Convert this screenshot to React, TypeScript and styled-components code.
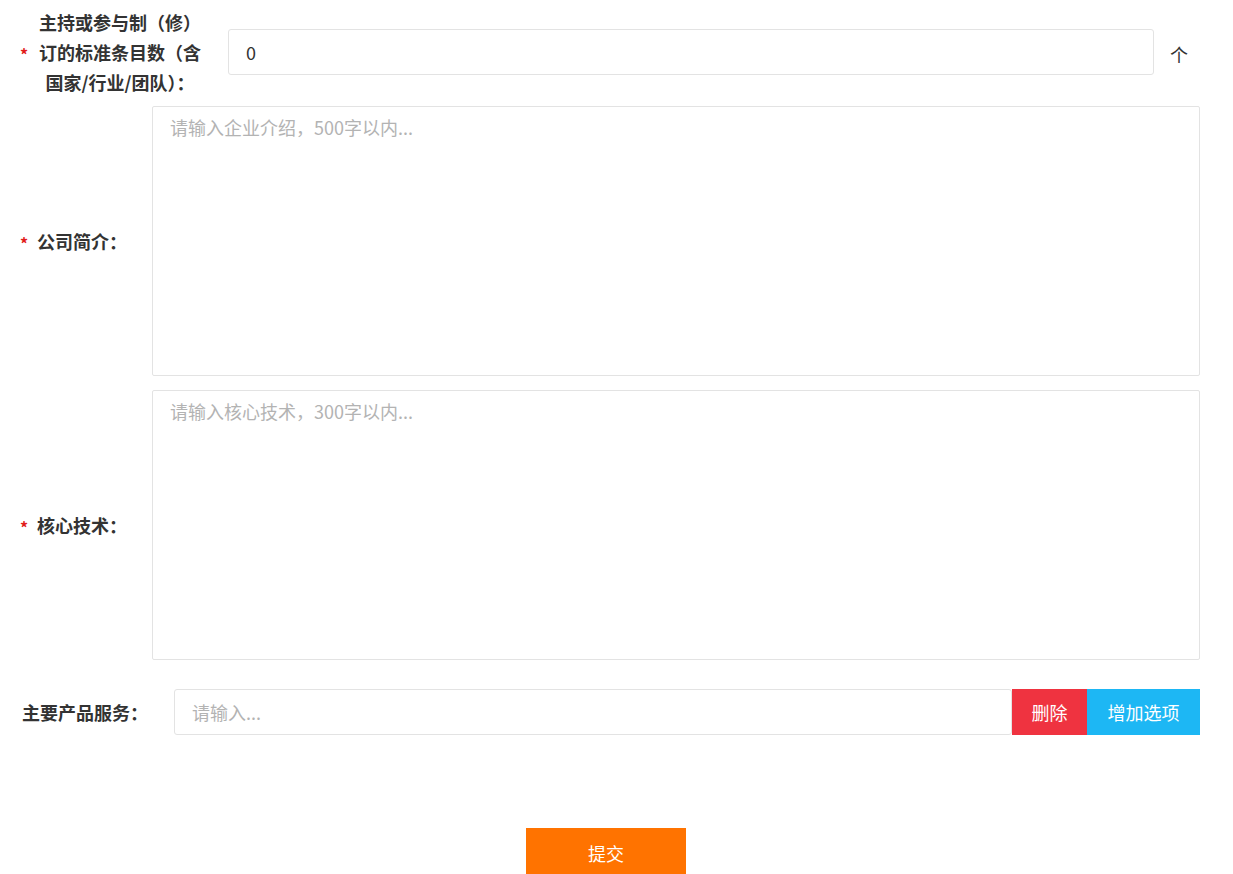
import React, { useState } from "react";
import styled, { createGlobalStyle } from "styled-components";

const GlobalStyle = createGlobalStyle`
  html, body {
    margin: 0;
    padding: 0;
    background: #fff;
    font-family: "Noto Sans CJK SC", "Noto Sans", "Liberation Sans", sans-serif;
    color: #333;
  }
  * {
    box-sizing: border-box;
  }
`;

const App = () => {
  const [standards, setStandards] = useState("0");
  const [intro, setIntro] = useState("");
  const [tech, setTech] = useState("");
  const [product, setProduct] = useState("");

  return (
    <>
      <GlobalStyle />
      <Form onSubmit={(e) => e.preventDefault()}>
        <Row $mb={9}>
          <Label $required>
            <LabelText $width={166} $center>
              主持或参与制（修）订的标准条目数（含国家/行业/团队）：
            </LabelText>
          </Label>
          <TextInput
            $gap={25}
            value={standards}
            onChange={(e) => setStandards(e.target.value)}
          />
          <Unit>个</Unit>
        </Row>

        <Row $mb={14}>
          <Label $required>
            <LabelText>公司简介：</LabelText>
          </Label>
          <TextArea
            placeholder='请输入企业介绍，500字以内...'
            value={intro}
            onChange={(e) => setIntro(e.target.value)}
          />
        </Row>

        <Row $mb={29}>
          <Label $required>
            <LabelText>核心技术：</LabelText>
          </Label>
          <TextArea
            placeholder='请输入核心技术，300字以内...'
            value={tech}
            onChange={(e) => setTech(e.target.value)}
          />
        </Row>

        <Row $mb={93}>
          <Label>
            <LabelText>主要产品服务：</LabelText>
          </Label>
          <TextInput
            $gap={26}
            placeholder='请输入...'
            value={product}
            onChange={(e) => setProduct(e.target.value)}
          />
          <ActionButton type='button' $color='#ef3340' $width={75}>
            删除
          </ActionButton>
          <ActionButton type='button' $color='#1db7f4' $width={113}>
            增加选项
          </ActionButton>
        </Row>

        <SubmitWrapper>
          <SubmitButton type='submit'>提交</SubmitButton>
        </SubmitWrapper>
      </Form>
    </>
  );
};

export default App;

const Form = styled.form`
  width: 1200px;
  padding: 7px 0 0 20px;
`;

const Row = styled.div<{ $mb: number }>`
  display: flex;
  align-items: center;
  margin-bottom: ${(p) => p.$mb}px;
`;

const Label = styled.label<{ $required?: boolean }>`
  display: flex;
  align-items: center;
  flex-shrink: 0;
  font-size: 18px;
  font-weight: 700;
  color: #333;
  padding-left: ${(p) => (p.$required ? "0" : "2px")};

  &::before {
    content: ${(p) => (p.$required ? '"*"' : "none")};
    color: #e21c1c;
    font-size: 16px;
    width: 17px;
    margin-top: 4px;
  }
`;

const LabelText = styled.span<{ $width?: number; $center?: boolean }>`
  display: block;
  width: ${(p) => (p.$width ? `${p.$width}px` : "auto")};
  text-align: ${(p) => (p.$center ? "center" : "left")};
  line-height: 30px;
  white-space: ${(p) => (p.$width ? "normal" : "nowrap")};
`;

const TextInput = styled.input<{ $gap: number }>`
  flex: 1;
  height: 46px;
  margin-left: ${(p) => p.$gap}px;
  padding: 0 17px;
  border: 1px solid #e3e3e3;
  border-radius: 3px;
  font-family: inherit;
  font-size: 18px;
  color: #333;
  outline: none;

  &::placeholder {
    color: #b3b3b3;
  }
`;

const Unit = styled.span`
  width: 46px;
  padding-left: 16px;
  font-size: 18px;
  color: #333;
  line-height: 46px;
  margin-top: 4px;
`;

const TextArea = styled.textarea`
  flex: 1;
  height: 270px;
  margin-left: 25px;
  padding: 6px 17px;
  border: 1px solid #e3e3e3;
  border-radius: 2px;
  font-family: inherit;
  font-size: 18px;
  line-height: 28px;
  color: #333;
  resize: none;
  outline: none;

  &::placeholder {
    color: #b3b3b3;
  }
`;

const ActionButton = styled.button<{ $color: string; $width: number }>`
  width: ${(p) => p.$width}px;
  height: 46px;
  border: none;
  background: ${(p) => p.$color};
  color: #fff;
  font-family: inherit;
  font-size: 18px;
  cursor: pointer;
`;

const SubmitWrapper = styled.div`
  padding-left: 506px;
`;

const SubmitButton = styled.button`
  width: 160px;
  height: 50px;
  border: none;
  background: #ff7300;
  color: #fff;
  font-family: inherit;
  font-size: 18px;
  cursor: pointer;
`;
